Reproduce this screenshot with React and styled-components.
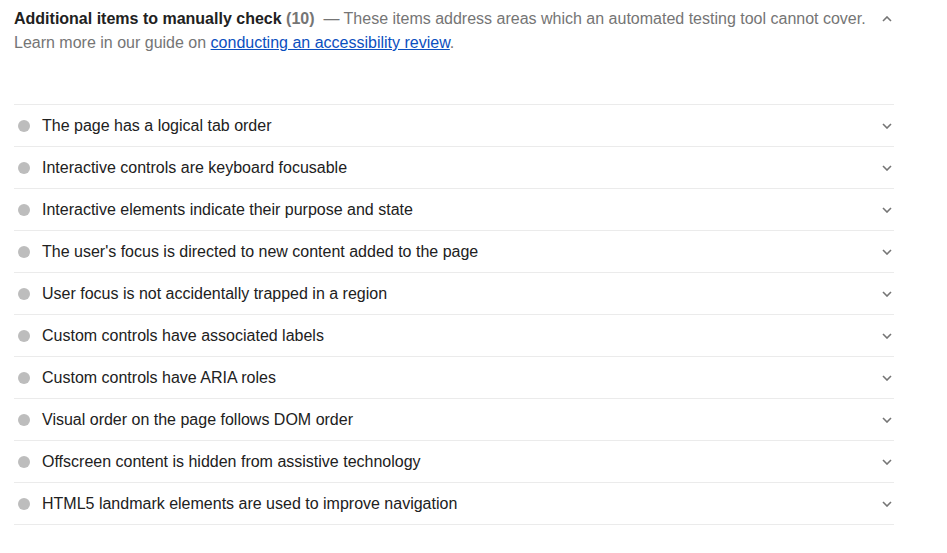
import React from 'react'
import styled, { createGlobalStyle } from 'styled-components'

const GlobalStyle = createGlobalStyle`
  body {
    margin: 0;
    background: #fff;
    font-family: "Liberation Sans", Arial, sans-serif;
    color: #212121;
  }
`

const Group = styled.section`
  width: 880px;
  padding: 7px 0 0 14px;
`

const Header = styled.div`
  display: flex;
  align-items: flex-start;
  font-size: 16px;
  line-height: 24px;
  margin-bottom: 49px;
`

const HeaderText = styled.div`
  flex: 1;
  padding-right: 4px;
`

const Title = styled.span`
  font-weight: 700;
  color: #212121;
`

const Count = styled.span`
  font-weight: 700;
  color: #757575;
`

const Description = styled.span`
  color: #757575;
`

const Link = styled.a`
  color: #0b4fc0;
  text-decoration: underline;
`

const ChevronBox = styled.div`
  width: 14px;
  height: 24px;
  display: flex;
  align-items: center;
  justify-content: center;
  color: #757575;
  flex-shrink: 0;
`

const List = styled.ul`
  list-style: none;
  margin: 0;
  padding: 0;
  border-bottom: 1px solid #ebebeb;
`

const Row = styled.li`
  display: flex;
  align-items: center;
  height: 41px;
  border-top: 1px solid #ebebeb;
  font-size: 16px;
  color: #212121;
`

const Dot = styled.span`
  width: 12px;
  height: 12px;
  border-radius: 50%;
  background: #bdbdbd;
  margin: 0 12px 0 4px;
  flex-shrink: 0;
`

const Label = styled.span`
  flex: 1;
`

const Chevron = ({ up }) => (
  <svg width="10" height="6" viewBox="0 0 10 6" style={up ? { transform: 'rotate(180deg)' } : undefined}>
    <path d="M1 1l4 4 4-4" fill="none" stroke="currentColor" strokeWidth="1.6" />
  </svg>
)

const items = [
  'The page has a logical tab order',
  'Interactive controls are keyboard focusable',
  'Interactive elements indicate their purpose and state',
  "The user's focus is directed to new content added to the page",
  'User focus is not accidentally trapped in a region',
  'Custom controls have associated labels',
  'Custom controls have ARIA roles',
  'Visual order on the page follows DOM order',
  'Offscreen content is hidden from assistive technology',
  'HTML5 landmark elements are used to improve navigation',
]

export default function App() {
  return (
    <>
      <GlobalStyle />
      <Group>
        <Header>
          <HeaderText>
            <Title>Additional items to manually check</Title> <Count>(10)</Count>
            <Description>
              {' '}
              &nbsp;— These items address areas which an automated testing tool cannot cover. Learn more in our
              guide on <Link href="#">conducting an accessibility review</Link>.
            </Description>
          </HeaderText>
          <ChevronBox>
            <Chevron up />
          </ChevronBox>
        </Header>
        <List>
          {items.map((t) => (
            <Row key={t}>
              <Dot />
              <Label>{t}</Label>
              <ChevronBox>
                <Chevron />
              </ChevronBox>
            </Row>
          ))}
        </List>
      </Group>
    </>
  )
}
